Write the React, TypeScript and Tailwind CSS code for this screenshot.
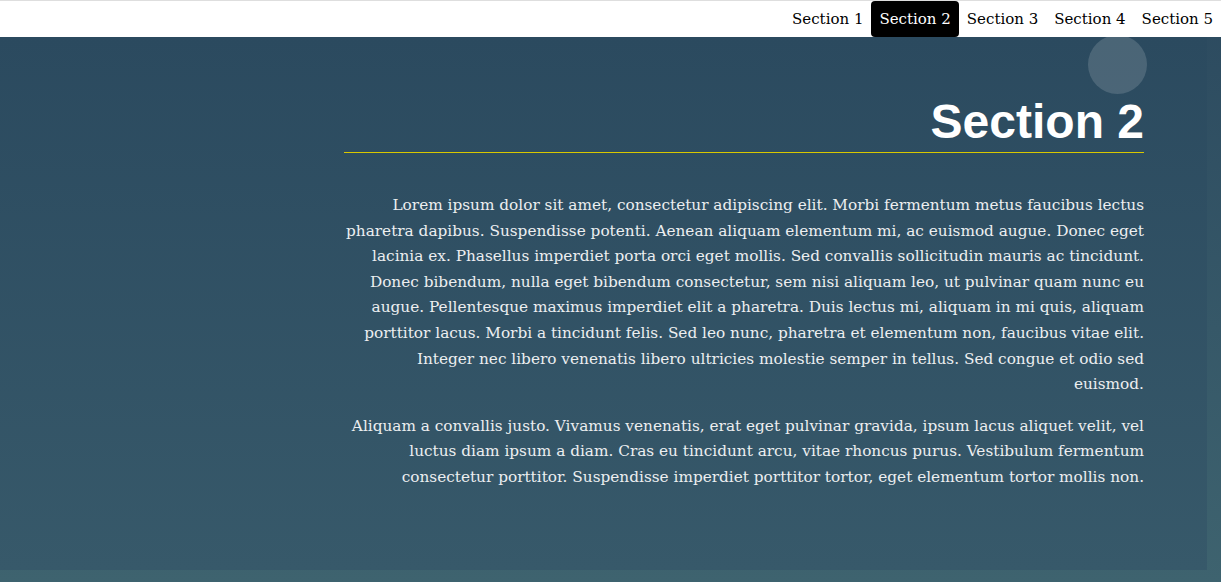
const para1 = [
  "Lorem ipsum dolor sit amet, consectetur adipiscing elit. Morbi fermentum metus faucibus lectus",
  "pharetra dapibus. Suspendisse potenti. Aenean aliquam elementum mi, ac euismod augue. Donec eget",
  "lacinia ex. Phasellus imperdiet porta orci eget mollis. Sed convallis sollicitudin mauris ac tincidunt.",
  "Donec bibendum, nulla eget bibendum consectetur, sem nisi aliquam leo, ut pulvinar quam nunc eu",
  "augue. Pellentesque maximus imperdiet elit a pharetra. Duis lectus mi, aliquam in mi quis, aliquam",
  "porttitor lacus. Morbi a tincidunt felis. Sed leo nunc, pharetra et elementum non, faucibus vitae elit.",
  "Integer nec libero venenatis libero ultricies molestie semper in tellus. Sed congue et odio sed",
  "euismod.",
];

const para2 = [
  "Aliquam a convallis justo. Vivamus venenatis, erat eget pulvinar gravida, ipsum lacus aliquet velit, vel",
  "luctus diam ipsum a diam. Cras eu tincidunt arcu, vitae rhoncus purus. Vestibulum fermentum",
  "consectetur porttitor. Suspendisse imperdiet porttitor tortor, eget elementum tortor mollis non.",
];

export default function App() {
  const items = ["Section 1", "Section 2", "Section 3", "Section 4", "Section 5"];
  return (
    <div className="min-h-screen h-[582px] flex flex-col bg-gradient-to-b from-[#2c4a5f] to-[#3e636f] overflow-hidden">
      <nav className="h-[37px] shrink-0 border-t border-[#dedede] bg-white flex justify-end items-stretch font-['DejaVu_Serif',serif] text-[15px] text-black z-10">
        {items.map((label) => (
          <a
            key={label}
            className={
              label === "Section 2"
                ? "px-2 flex items-center rounded bg-black text-white"
                : "px-2 flex items-center"
            }
          >
            {label}
          </a>
        ))}
      </nav>

      <section className="relative w-[1207px] h-[533px] bg-gradient-to-b from-[#2b4a5f] to-[#37596a]">
        <div className="absolute top-[-2px] right-[60px] w-[59px] h-[59px] rounded-full bg-white/15" />

        <div className="ml-[344px] w-[800px] pt-[57px]">
          <h1 className="font-['Liberation_Sans',Arial,sans-serif] font-bold text-[48px] leading-[55px] text-white text-right pb-[3px] border-b border-[#d9c800]">
            Section 2
          </h1>
          <div className="mt-10 font-['DejaVu_Serif',serif] text-[15.3px] leading-[25.6px] text-[#eceef0] text-right whitespace-nowrap">
            <p>
              {para1.map((line) => (
                <span key={line} className="block">
                  {line}
                </span>
              ))}
            </p>
            <p className="mt-4">
              {para2.map((line) => (
                <span key={line} className="block">
                  {line}
                </span>
              ))}
            </p>
          </div>
        </div>
      </section>
    </div>
  );
}
